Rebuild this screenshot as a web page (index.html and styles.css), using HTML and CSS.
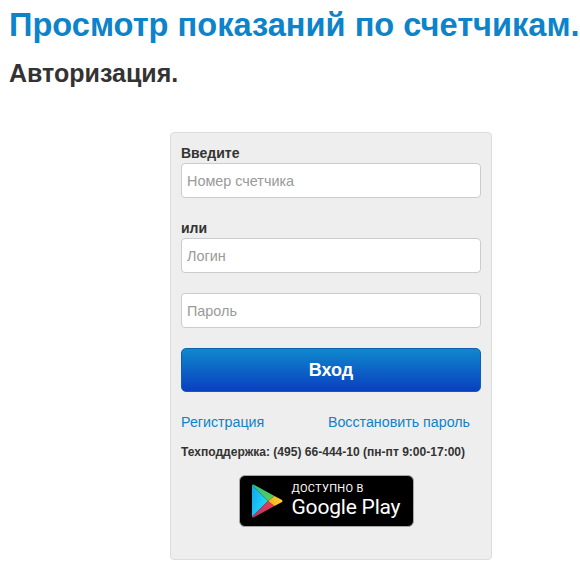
FILE: index.html
```html
<!DOCTYPE html>
<html lang="ru">
<head>
<meta charset="utf-8">
<title>Авторизация</title>
<link rel="stylesheet" href="styles.css">
</head>
<body>
<h1 class="title">Просмотр показаний по счетчикам.</h1>
<h2 class="subtitle">Авторизация.</h2>
<form class="card">
  <label class="label">Введите</label>
  <input class="field field-first" type="text" placeholder="Номер счетчика">
  <label class="label label-or">или</label>
  <input class="field field-login" type="text" placeholder="Логин">
  <input class="field field-pass" type="text" placeholder="Пароль">
  <button class="submit" type="button">Вход</button>
  <div class="links">
    <a class="link" href="#">Регистрация</a>
    <a class="link" href="#">Восстановить пароль</a>
  </div>
  <p class="support">Техподдержка: (495) 66-444-10 (пн-пт 9:00-17:00)</p>
  <a class="badge" href="#">
    <svg class="play" viewBox="0 0 31 34" width="31" height="34" aria-hidden="true">
      <defs>
        <linearGradient id="pb" x1="0" y1="0" x2="1" y2="0.6">
          <stop offset="0" stop-color="#12a5f0"/>
          <stop offset="1" stop-color="#1fe0f8"/>
        </linearGradient>
        <linearGradient id="pg" x1="0" y1="0" x2="1" y2="1">
          <stop offset="0" stop-color="#2bbf8e"/>
          <stop offset="1" stop-color="#5fd04e"/>
        </linearGradient>
        <linearGradient id="py" x1="0" y1="0" x2="1" y2="0">
          <stop offset="0" stop-color="#f7a823"/>
          <stop offset="1" stop-color="#fdd52d"/>
        </linearGradient>
        <linearGradient id="pr" x1="1" y1="0" x2="0" y2="1">
          <stop offset="0" stop-color="#ee3f4b"/>
          <stop offset="1" stop-color="#b8326f"/>
        </linearGradient>
      </defs>
      <path d="M0 1 L0 33 L16 17 Z" fill="url(#pb)"/>
      <path d="M0 1 Q0.5 0 2 0.8 L22.5 12 L16 17 Z" fill="url(#pg)"/>
      <path d="M0 33 Q0.5 34 2 33.2 L22.5 22 L16 17 Z" fill="url(#pr)"/>
      <path d="M22.5 12 L30 16 Q31 17 30 18 L22.5 22 L16 17 Z" fill="url(#py)"/>
    </svg>
    <span class="badge-text">
      <span class="badge-small">ДОСТУПНО В</span>
      <span class="badge-big">Google Play</span>
    </span>
  </a>
</form>
</body>
</html>
```
FILE: styles.css
```css
html, body { margin: 0; padding: 0; }
body {
  width: 580px;
  height: 565px;
  overflow: hidden;
  background: #fff;
  font-family: "Liberation Sans", Arial, sans-serif;
  color: #333;
}
.title {
  margin: 0;
  padding: 7px 0 0 9px;
  font-size: 32.6px;
  line-height: 36px;
  font-weight: 700;
  color: #0d83c9;
  white-space: nowrap;
}
.subtitle {
  margin: 0;
  padding: 16px 0 0 9px;
  font-size: 25px;
  line-height: 28px;
  font-weight: 700;
  color: #333;
}
.card {
  box-sizing: border-box;
  width: 322px;
  height: 428px;
  margin: 45px 0 0 170px;
  padding: 11px 10px 0;
  background: #eee;
  border: 1px solid #ddd;
  border-radius: 4px;
  display: flex;
  flex-direction: column;
}
.label {
  display: block;
  font-size: 14px;
  line-height: 19px;
  font-weight: 700;
  color: #333;
}
.label-or { margin-top: 21px; }
.field {
  box-sizing: border-box;
  width: 300px;
  height: 35px;
  padding: 0 5px;
  background: #fff;
  border: 1px solid #ccc;
  border-radius: 4px;
  font-family: inherit;
  font-size: 14.4px;
  color: #333;
  flex: none;
}
.field::placeholder { color: #999; opacity: 1; }
.field-pass { margin-top: 20px; }
.submit {
  width: 300px;
  height: 44px;
  margin-top: 20px;
  padding: 0;
  border: 1px solid #0d5fb0;
  border-radius: 5px;
  background: linear-gradient(to bottom, #0f88cc, #0a3fc0);
  color: #fff;
  font-family: inherit;
  font-size: 18px;
  font-weight: 700;
  flex: none;
}
.links {
  display: flex;
  justify-content: space-between;
  padding-right: 11px;
  margin-top: 20px;
  line-height: 20px;
}
.link {
  font-size: 14.25px;
  color: #0d83c9;
  text-decoration: none;
}
.support {
  margin: 11px 0 0;
  font-size: 12.05px;
  line-height: 18px;
  font-weight: 700;
  color: #333;
  white-space: nowrap;
}
.badge {
  box-sizing: border-box;
  align-self: center;
  width: 175px;
  height: 52px;
  margin: 14px 0 0 -10px;
  background: #000;
  border: 1px solid #a6a6a6;
  border-radius: 6px;
  display: flex;
  align-items: center;
  padding-left: 12px;
  gap: 9px;
  text-decoration: none;
}
.badge-text { display: flex; flex-direction: column; color: #fff; }
.badge-small { font-size: 11px; line-height: 13px; font-family: Roboto, sans-serif; letter-spacing: .3px; }
.badge-big { font-size: 21px; line-height: 25px; font-family: Roboto, sans-serif; letter-spacing: -.2px; }
```
